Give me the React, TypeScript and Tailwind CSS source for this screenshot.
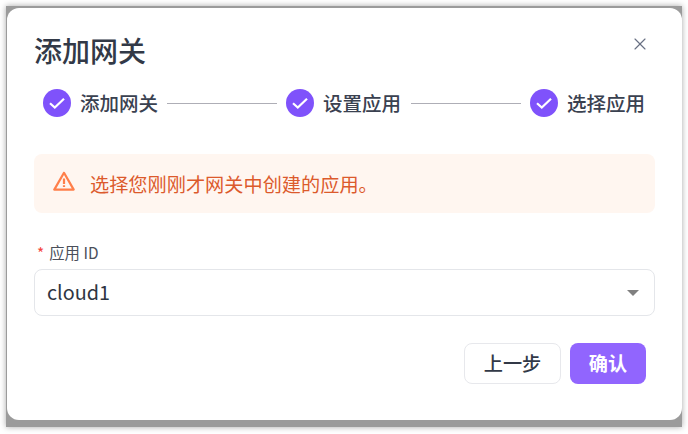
import { X } from 'lucide-react';

const steps = ['添加网关', '设置应用', '选择应用'];

function CheckDot() {
  return (
    <svg width="28" height="28" viewBox="0 0 28 28" className="shrink-0">
      <circle cx="14" cy="14" r="14" fill="#7f52fb" />
      <path d="M7 14.2l4.8 4.4 9.2-8.8" fill="none" stroke="#fff" strokeWidth="2.2" />
    </svg>
  );
}

export default function App() {
  return (
    <div className="w-[688px] h-[434px] bg-white pl-[6px] pt-[6px] overflow-hidden font-['Noto_Sans_CJK_SC','Noto_Sans',sans-serif]">
      <div className="w-[676px] h-[421px] bg-[#9b9b9b] pl-px pt-[2px] shadow-[0_0_6px_rgba(0,0,0,0.35)]">
        <div className="w-[675px] h-[412px] bg-white rounded-xl pt-[22px] pl-[27px] pr-[27px]">
          <div className="flex justify-between items-start h-[42px]">
            <h1 className="text-[28px] leading-[40px] font-medium text-[#323947]">添加网关</h1>
            <X size={20} strokeWidth={1.4} className="text-[#687083] mr-[5px] mt-[4px]" />
          </div>
          <div className="flex items-center h-[28px] mt-[17px] pl-[9px]">
            {steps.map((label, i) => (
              <div key={label} className="flex items-center">
                <CheckDot />
                <span className="ml-[9px] w-[78px] text-[19.5px] leading-[28px] font-medium text-[#3a4150] whitespace-nowrap">{label}</span>
                {i < 2 && <div className={i === 1 ? 'w-[110px] h-px bg-[#aeaeb6] ml-[10px] mr-[9px]' : 'w-[110px] h-px bg-[#aeaeb6] mx-[9px]'} />}
              </div>
            ))}
          </div>
          <div className="flex items-center h-[59px] mt-[37px] rounded-lg bg-[#fff6f0] pl-[19px]">
            <svg width="22" height="20" viewBox="0 0 22 20" className="mb-[5px] shrink-0">
              <path d="M11 1.8L1.3 18.6h19.4z" fill="none" stroke="#ff7f4a" strokeWidth="2.2" strokeLinejoin="round" />
              <path d="M11 7.5v5.5M11 14.2v1.8" stroke="#ff7f4a" strokeWidth="2.2" fill="none" />
            </svg>
            <span className="ml-[15px] text-[19.2px] leading-[26px] text-[#dc5a2c]">选择您刚刚才网关中创建的应用。</span>
          </div>
          <label className="flex items-center h-[20px] mt-[29px] pl-[3px] text-[15.4px] leading-[20px] text-[#4a4f5a]">
            <span className="text-[#f5463c] mr-[5px]">*</span>
            应用 ID
          </label>
          <div className="flex items-center justify-between h-[47px] mt-[7px] rounded-lg border border-[#e4e6ea] pl-[12px] pr-[15px]">
            <span className="text-[19.8px] leading-[26px] mb-[2px] text-[#2f3541]">cloud1</span>
            <div className="w-0 h-0 border-x-[6px] border-x-transparent border-t-[6px] border-t-[#808080]" />
          </div>
          <div className="flex justify-end gap-[9px] mt-[27px] pr-[9px]">
            <button className="w-[97px] h-[41px] rounded-lg border border-[#e7e8ec] bg-white text-[19.2px] font-medium text-[#323947]">上一步</button>
            <button className="w-[76px] h-[41px] rounded-lg bg-[#9165fe] text-[19.2px] font-bold text-white">确认</button>
          </div>
        </div>
      </div>
    </div>
  );
}
